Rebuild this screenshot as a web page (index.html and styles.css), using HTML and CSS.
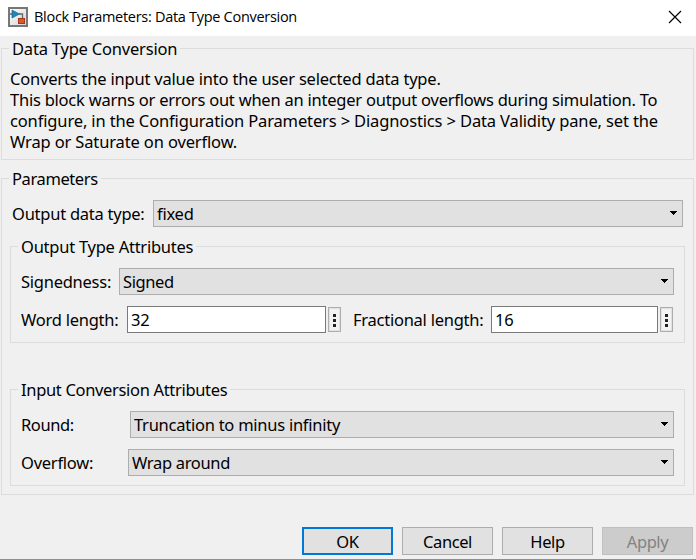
FILE: index.html
```html
<!DOCTYPE html>
<html lang="en">
<head>
<meta charset="utf-8">
<title>Block Parameters: Data Type Conversion</title>
<link rel="stylesheet" href="styles.css">
</head>
<body>
<div class="dialog">
  <header class="titlebar">
    <svg class="app-icon" width="20" height="20" viewBox="0 0 20 20">
      <defs><linearGradient id="g" x1="0" y1="0" x2="1" y2="1"><stop offset="0" stop-color="#fff"/><stop offset="1" stop-color="#cfd3d8"/></linearGradient></defs>
      <rect x="1" y="1" width="18" height="18" fill="url(#g)" stroke="#777" stroke-width="2"/>
      <path d="M2 7H5M11 7H14.5V12" fill="none" stroke="#666" stroke-width="1.3"/>
      <path d="M4 3L11.5 7L4 11Z" fill="#2185b8" stroke="#17648f" stroke-width=".7"/>
      <rect x="10.5" y="11.5" width="6" height="5" fill="#d75a2c" stroke="#a83813"/>
    </svg>
    <h1 class="title">Block Parameters: Data Type Conversion</h1>
    <svg class="close" width="14" height="14" viewBox="0 0 14 14"><path d="M1 1L13 13M13 1L1 13" fill="none" stroke="#000" stroke-width="1.15"/></svg>
  </header>

  <section class="group description">
    <h2 class="legend ls-20">Data Type Conversion</h2>
    <p class="text">
      <span class="line ls-20">Converts the input value into the user selected data type.</span>
      <span class="line ls-23">This block warns or errors out when an integer output overflows during simulation. To</span>
      <span class="line ls-14">configure, in the Configuration Parameters &gt; Diagnostics &gt; Data Validity pane, set the</span>
      <span class="line ls-14">Wrap or Saturate on overflow.</span>
    </p>
  </section>

  <section class="group parameters">
    <h2 class="legend ls-40">Parameters</h2>
    <div class="row row-type">
      <span class="label label-type">Output data type:</span>
      <div class="combo">fixed<svg class="arrow" width="7" height="4" viewBox="0 0 7 4"><path d="M0 0H7V1H6V2H5V3H4V4H3V3H2V2H1V1H0Z"/></svg></div>
    </div>

    <section class="group inner output">
      <h3 class="legend">Output Type Attributes</h3>
      <div class="row">
        <span class="label label-sign">Signedness:</span>
        <div class="combo ls-40">Signed<svg class="arrow" width="7" height="4" viewBox="0 0 7 4"><path d="M0 0H7V1H6V2H5V3H4V4H3V3H2V2H1V1H0Z"/></svg></div>
      </div>
      <div class="row">
        <span class="label label-word">Word length:</span>
        <div class="field field-word">32</div>
        <div class="more"><i></i><i></i><i></i></div>
        <span class="label label-frac">Fractional length:</span>
        <div class="field field-frac">16</div>
        <div class="more"><i></i><i></i><i></i></div>
      </div>
    </section>

    <section class="group inner input">
      <h3 class="legend ls-33">Input Conversion Attributes</h3>
      <div class="row">
        <span class="label label-round ls-40">Round:</span>
        <div class="combo">Truncation to minus infinity<svg class="arrow" width="7" height="4" viewBox="0 0 7 4"><path d="M0 0H7V1H6V2H5V3H4V4H3V3H2V2H1V1H0Z"/></svg></div>
      </div>
      <div class="row">
        <span class="label label-over">Overflow:</span>
        <div class="combo ls-33">Wrap around<svg class="arrow" width="7" height="4" viewBox="0 0 7 4"><path d="M0 0H7V1H6V2H5V3H4V4H3V3H2V2H1V1H0Z"/></svg></div>
      </div>
    </section>
  </section>

  <footer class="buttons">
    <div class="button primary">OK</div>
    <div class="button">Cancel</div>
    <div class="button">Help</div>
    <div class="button disabled">Apply</div>
  </footer>
</div>
</body>
</html>
```
FILE: styles.css
```css
* { box-sizing: border-box; }
body {
  margin: 0;
  background: #f0f0f0;
  color: #000;
  font: 16.5px/21px "Noto Sans", sans-serif;
  letter-spacing: -0.25px;
  white-space: nowrap;
}
h1, h2, h3, p { margin: 0; font: inherit; }

.dialog {
  display: flex;
  flex-direction: column;
  width: 696px;
  height: 560px;
  overflow: hidden;
  border-bottom: 1px solid #4aa3df;
}
.titlebar {
  display: flex;
  align-items: center;
  flex: none;
  height: 36px;
  padding: 0 14px 2px 8px;
  background: #fff;
}
.app-icon { display: block; }
.title {
  flex: 1;
  padding-left: 6px;
  font: 14.5px/20px "Open Sans", sans-serif;
  letter-spacing: -0.29px;
}
.close { display: block; }

.group {
  flex: none;
  border: 1px solid #dcdcdc;
}
.legend {
  width: fit-content;
  height: 21px;
  margin: -11px 0 0 7px;
  padding: 0 3px;
  background: #f0f0f0;
}
.description { height: 112px; margin: 12px 2px 0 1px; }
.text { padding: 9px 0 0 8px; }
.line { display: block; }

.parameters { height: 317px; margin: 18px 2px 0 1px; }
.row { display: flex; align-items: center; height: 27px; }
.row-type { margin: 11px 10px 0; }
.label { flex: none; }
.label-type { width: 141px; }
.label-sign { width: 98px; }
.label-word { width: 106px; }
.label-frac { width: 138px; margin-left: 12px; }
.label-round { width: 109px; }
.label-over { width: 107px; }

.inner { height: 97px; margin: 19px 8px 0; }
.inner .row { margin: 11px 10px 0; }
.inner .legend + .row { margin-top: 11px; }
.input { margin-top: 46px; }

.combo {
  display: flex;
  align-items: center;
  justify-content: space-between;
  flex: 1;
  height: 27px;
  padding: 0 5px 0 3px;
  background: #e1e1e1;
  border: 1px solid #adadad;
}
.arrow { display: block; margin-bottom: 2px; }
.field {
  height: 27px;
  padding: 2px 3px;
  background: #fff;
  border: 1px solid #7a7a7a;
}
.field-word { width: 199px; }
.field-frac { width: 167px; }
.more {
  display: flex;
  flex-direction: column;
  align-items: center;
  justify-content: center;
  gap: 2px;
  width: 13px;
  height: 25px;
  margin-left: 2px;
  padding-top: 1px;
  background: #f3f3f3;
  border: 1px solid #adadad;
  box-shadow: inset 0 0 0 1px #e1e1e1;
}
.more i { width: 3px; height: 3px; background: #222; }

.buttons {
  display: flex;
  justify-content: flex-end;
  gap: 9px;
  margin: 32px 3px 0 0;
}
.button {
  width: 91px;
  height: 28px;
  padding-top: 3px;
  background: #e1e1e1;
  border: 1px solid #adadad;
  text-align: center;
  letter-spacing: -0.4px;
}
.primary { border: 2px solid #0078d7; padding-top: 2px; }
.disabled { background: #ccc; border-color: #bfbfbf; color: #838383; }

.ls-14 { letter-spacing: -0.14px; }
.ls-20 { letter-spacing: -0.2px; }
.ls-23 { letter-spacing: -0.23px; }
.ls-33 { letter-spacing: -0.33px; }
.ls-40 { letter-spacing: -0.4px; }
```
